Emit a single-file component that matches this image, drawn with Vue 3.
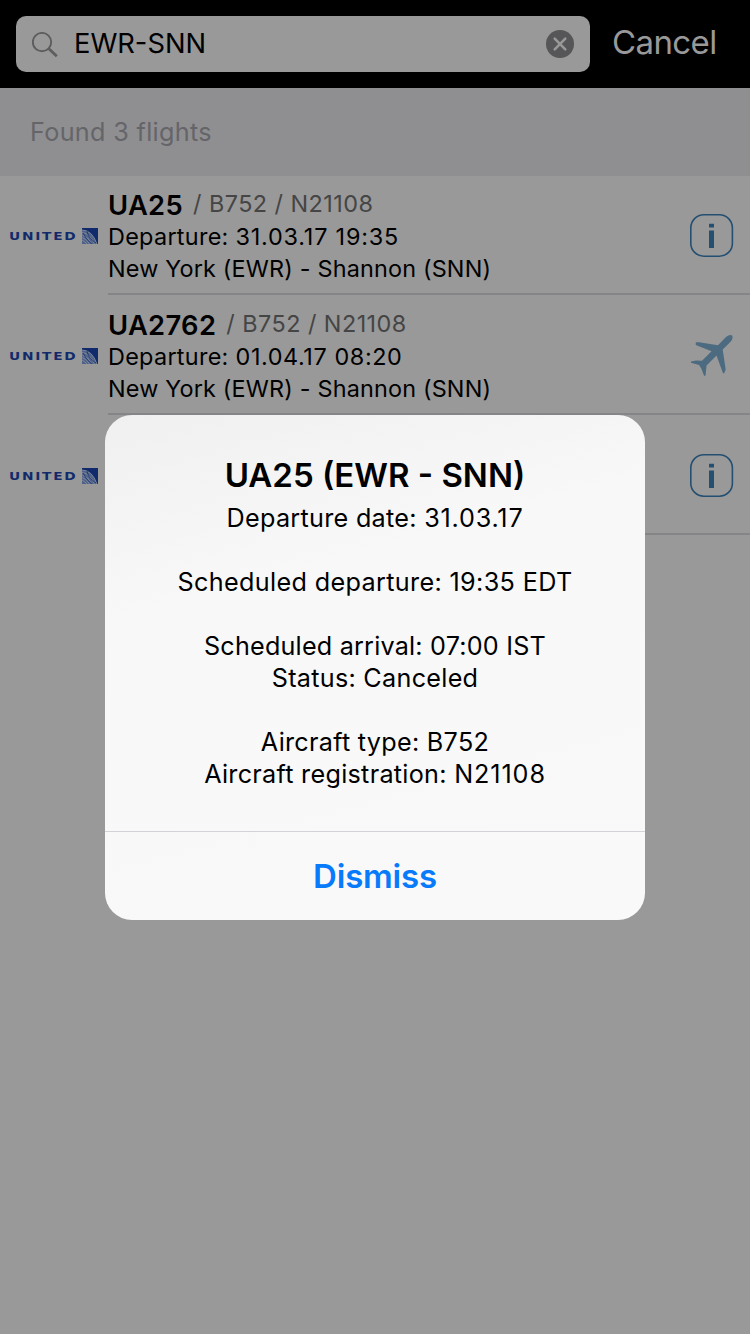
<script setup>
const flights = [
  { number: 'UA25', details: '/ B752 / N21108', date: '31.03.17 19:35', tracking: 'wide', route: 'New York (EWR) - Shannon (SNN)', icon: 'info', key: 'a' },
  { number: 'UA2762', details: '/ B752 / N21108', date: '01.04.17 08:20', tracking: 'medium', route: 'New York (EWR) - Shannon (SNN)', icon: 'plane', key: 'b' },
  { icon: 'info', key: 'c' }
]
</script>

<template>
  <main class="screen">
    <header class="bar">
      <div class="search">
        <svg class="glass" width="28" height="28" viewBox="0 0 28 28" fill="none" stroke="#5d5d60">
          <circle cx="10" cy="10.1" r="9.2" stroke-width="1.9" />
          <path d="M16.6 16.6L24.8 24.3" stroke-width="2.8" />
        </svg>
        <span class="query">EWR-SNN</span>
        <svg class="clear" width="28" height="28" viewBox="0 0 28 28">
          <circle cx="14" cy="14" r="14" fill="#565659" />
          <path d="M8.7 8.7L19.3 19.3M19.3 8.7L8.7 19.3" stroke="#999" stroke-width="2.5" stroke-linecap="round" />
        </svg>
      </div>
      <span class="cancel">Cancel</span>
    </header>
    <div class="found"><span>Found 3 flights</span></div>

    <section class="list">
      <article v-for="f in flights" :key="f.key" class="row">
        <div class="logo">
          <span class="brand">UNITED</span>
          <svg width="16" height="16" viewBox="0 0 16 16" fill="none">
            <rect width="16" height="16" fill="#112a6b" />
            <path d="M0 2Q10 2 15 16H0Z" fill="#50628a" />
            <g stroke="#8b929d" stroke-width=".8">
              <path d="M0 2Q10 2 15 16" />
              <path d="M0 4.5Q8 5.5 12.5 16" />
              <path d="M0 7Q6 8.5 10 16" />
              <path d="M0 9.5Q5 11 7.5 16" />
              <path d="M0 12Q3 13.5 5 16" />
            </g>
            <path d="M5 3Q6 10 14 15M1 5Q4 12 10 16" stroke="#112a6b" stroke-width=".7" />
          </svg>
        </div>
        <div class="info">
          <template v-if="f.number">
            <div class="line top"><b>{{ f.number }}</b><span class="details">{{ f.details }}</span></div>
            <div class="line dep">Departure: <span :class="f.tracking">{{ f.date }}</span></div>
            <div class="line route">{{ f.route }}</div>
          </template>
        </div>
        <svg v-if="f.icon === 'info'" class="action" width="44" height="44" viewBox="0 0 44 44">
          <rect x=".8" y=".8" width="41.6" height="41.4" rx="13" fill="none" stroke="#254f71" stroke-width="1.6" />
          <path d="M19 9.7h5v3.7h-5zM19 16.4h5v17.6h-5z" fill="#254f71" />
        </svg>
        <svg v-else class="action" width="44" height="44" viewBox="0 0 44 44" fill="#4d6b80">
          <path d="M28 11.2L36 3Q39.5 0 42.2 1.4Q43.4 4.2 40.6 7.8L32.7 15.6L35.7 35.5L34.2 39.2H33L26.5 21.5L16.5 31.5L15.6 41.2L14.2 42L11.3 34.5L9 31L1 28.7V27.4L6 26.4L12 26.7L21.5 17.2L5.8 10.9V8.2H9Z" />
        </svg>
      </article>
    </section>

    <div class="overlay">
      <div class="dialog">
        <div class="body">
          <h1>UA25 (EWR - SNN)</h1>
          <p class="m1">Departure date: <span>31.03.17</span></p>
          <p class="m2 gap">Scheduled departure: 19:35 EDT</p>
          <p class="m3 gap">Scheduled arrival: 07:00 IST</p>
          <p class="m4">Status: Canceled</p>
          <p class="m5 gap">Aircraft type: B752</p>
          <p class="m6">Aircraft registration: <span>N21108</span></p>
        </div>
        <div class="dismiss">Dismiss</div>
      </div>
    </div>
  </main>
</template>

<style>
body { margin: 0; background: #999; }
</style>

<style scoped>
.screen { position: relative; width: 750px; height: 1334px; overflow: hidden; background: #999; color: #000; font-family: Inter, "Liberation Sans", sans-serif; white-space: nowrap; }
.bar { display: flex; align-items: center; height: 88px; background: #000; }
.search { display: flex; align-items: center; box-sizing: border-box; width: 574px; height: 56px; margin-left: 16px; padding: 0 16px; border-radius: 10px; background: #999; }
.glass { margin-top: 4px; }
.query { flex: 1; margin: -2px 0 0 14px; font-size: 27.3px; }
.cancel { margin: -5px 0 0 22px; font-size: 33px; letter-spacing: -.6px; color: #999; line-height: 40px; }
.found { display: flex; align-items: center; height: 88px; padding-left: 30px; background: #8f8f91; color: #656569; font-size: 25.2px; letter-spacing: .33px; }
.row { display: flex; height: 120px; }
.row:first-child { height: 119px; }
.row:first-child .logo { height: 68px; padding-top: 52px; }
.row:first-child .info { padding-top: 13px; }
.row:first-child .action { margin-top: 38px; }
.logo { display: flex; box-sizing: border-box; width: 89px; height: 69px; margin-left: 9px; padding-top: 53px; }
.logo svg { flex: none; }
.brand { font-family: "DejaVu Sans", sans-serif; font-size: 11px; line-height: 18px; font-weight: 700; letter-spacing: 1.4px; color: #112a6b; width: 73px; transform: scaleX(1.25); transform-origin: left; }
.info { box-sizing: border-box; flex: 1; margin-left: 10px; padding-top: 14px; border-bottom: 2px solid #858587; }
.line { display: flex; height: 32px; line-height: 32px; font-size: 23.4px; white-space: pre; }
.top b { font-size: 27.3px; font-weight: 600; letter-spacing: .35px; padding-top: 1px; }
.details { margin: -1px 0 0 10px; letter-spacing: .46px; color: #454545; }
.dep { letter-spacing: .3px; }
.wide { letter-spacing: .8px; }
.medium { letter-spacing: .6px; }
.route { letter-spacing: .18px; }
.row .action { position: absolute; right: 16px; margin-top: 39px; }
.overlay { position: absolute; inset: 0; display: flex; align-items: flex-start; justify-content: center; padding-top: 415px; }
.dialog { width: 540px; height: 505px; border-radius: 27px; overflow: hidden; background: linear-gradient(165deg, #f0f0f0 0, #f8f8f9 32%, #f9f9f9 100%); text-align: center; }
.body { box-sizing: border-box; height: 417px; padding-top: 38px; border-bottom: 1px solid #d2d3d9; }
h1 { margin: 0; height: 49px; line-height: 44px; font-size: 33px; font-weight: 600; }
p { margin: 0; height: 32px; line-height: 32px; font-size: 25.2px; letter-spacing: .28px; }
.m1 span { letter-spacing: .8px; }
.m2 { letter-spacing: .35px; }
.m3 { letter-spacing: .2px; }
.m6 span { letter-spacing: .9px; }
.gap { margin-top: 32px; }
.dismiss { line-height: 88px; font-size: 33px; font-weight: 600; letter-spacing: -.2px; color: #087bfb; }
</style>
